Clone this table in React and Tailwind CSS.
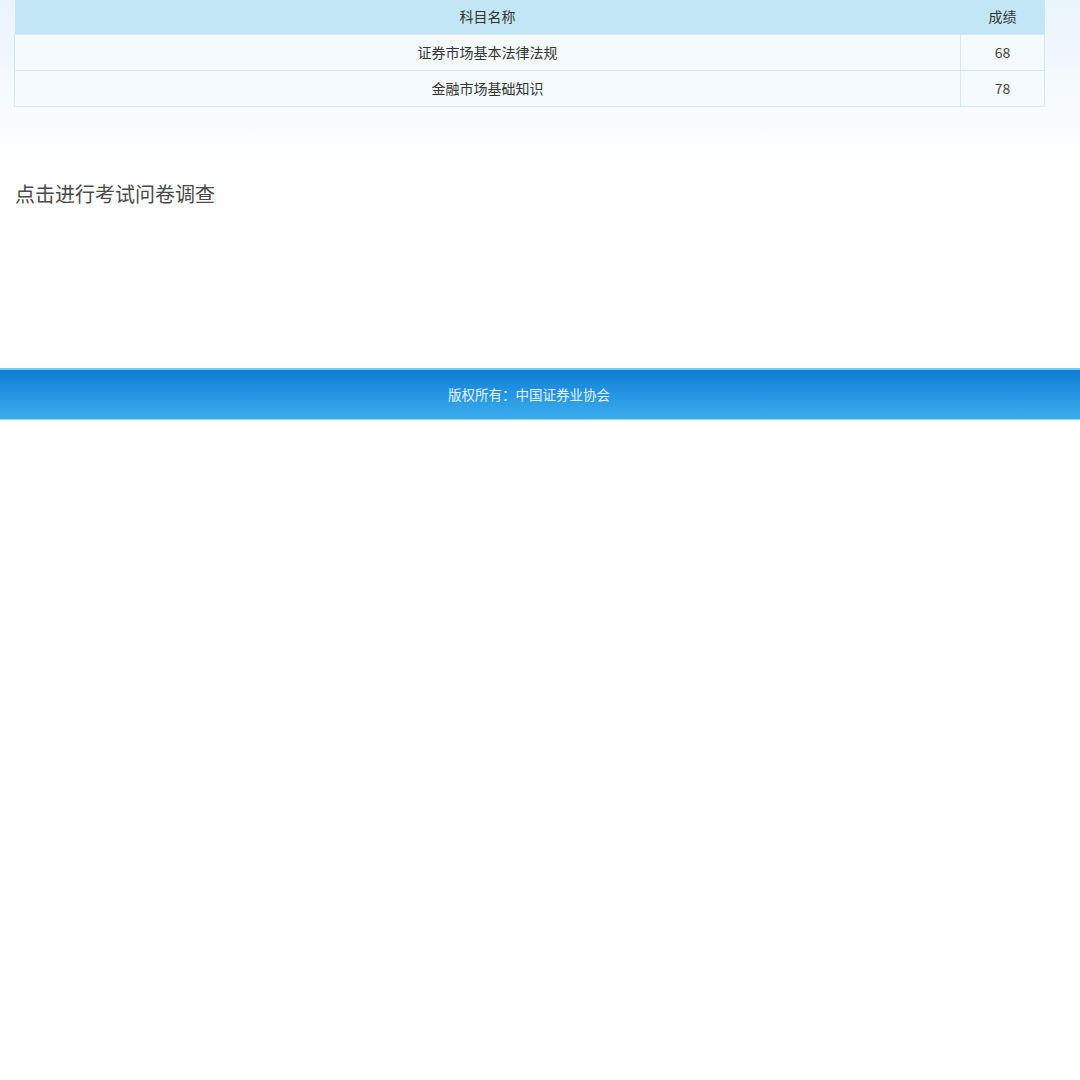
const rows = [
  { name: "证券市场基本法律法规", score: 68 },
  { name: "金融市场基础知识", score: 78 },
];

export default function App() {
  return (
    <div
      className="min-h-[1080px] bg-white text-[#333]"
      style={{ fontFamily: '"Noto Sans CJK SC", "Noto Sans", sans-serif' }}
    >
      {/* Main content */}
      <div className="h-[368px] bg-gradient-to-b from-[#e9f4fb] via-white via-[45%] to-white px-[14px]">
        <table className="w-[1031px] border-collapse text-[14px]">
          <thead>
            <tr className="h-[34px] bg-[#c3e6f5]">
              <th className="font-normal text-[#333] text-center">科目名称</th>
              <th className="w-[84px] font-normal text-[#333] text-center">成绩</th>
            </tr>
          </thead>
          <tbody>
            {rows.map((r) => (
              <tr key={r.name} className="h-[36px] bg-[#f5fafe]">
                <td className="border border-[#d3e8f7] text-center text-[#333]">{r.name}</td>
                <td className="border border-[#d3e8f7] text-center text-[#444]">{r.score}</td>
              </tr>
            ))}
          </tbody>
        </table>

        <div className="mt-[73px] pl-[1px] text-[20px] leading-[28px] text-[#4a4a4a]">
          点击进行考试问卷调查
        </div>
      </div>

      {/* Footer */}
      <div className="h-[52px] border-t-2 border-b border-t-[#7cc8f2] border-b-[#9fd8f7] bg-gradient-to-b from-[#0a7fd5] to-[#3bacef] flex items-center justify-center">
        <span className="pr-[22px] text-[13.5px] text-[#e4f2fc]">版权所有：中国证券业协会</span>
      </div>
    </div>
  );
}
